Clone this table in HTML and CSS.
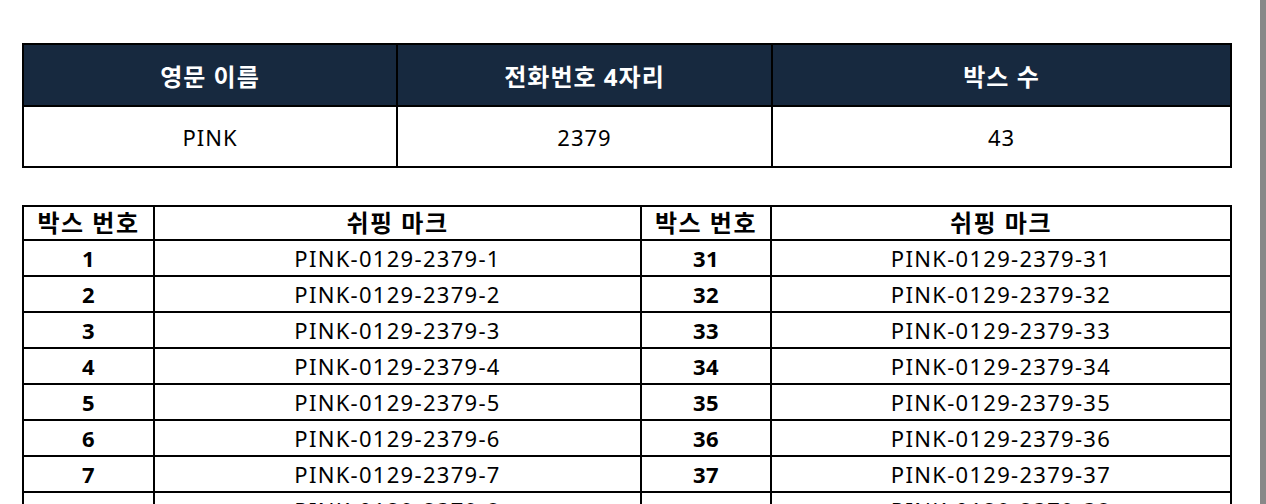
FILE: index.html
```html
<!DOCTYPE html>
<html lang="ko">
<head>
<meta charset="utf-8">
<title>쉬핑 마크</title>
<link rel="stylesheet" href="styles.css">
</head>
<body>
<div class="page">
  <main class="content">
    <table class="summary">
      <colgroup>
        <col class="s-c1"><col class="s-c2"><col class="s-c3">
      </colgroup>
      <thead>
        <tr><th>영문 이름</th><th>전화번호 4자리</th><th>박스 수</th></tr>
      </thead>
      <tbody>
        <tr><td>PINK</td><td>2379</td><td>43</td></tr>
      </tbody>
    </table>

    <table class="marks">
      <colgroup>
        <col class="m-num"><col class="m-mark"><col class="m-num2"><col class="m-mark2">
      </colgroup>
      <thead>
        <tr><th>박스 번호</th><th>쉬핑 마크</th><th>박스 번호</th><th>쉬핑 마크</th></tr>
      </thead>
      <tbody>
        <tr><td class="num">1</td><td>PINK-0129-2379-1</td><td class="num">31</td><td>PINK-0129-2379-31</td></tr>
        <tr><td class="num">2</td><td>PINK-0129-2379-2</td><td class="num">32</td><td>PINK-0129-2379-32</td></tr>
        <tr><td class="num">3</td><td>PINK-0129-2379-3</td><td class="num">33</td><td>PINK-0129-2379-33</td></tr>
        <tr><td class="num">4</td><td>PINK-0129-2379-4</td><td class="num">34</td><td>PINK-0129-2379-34</td></tr>
        <tr><td class="num">5</td><td>PINK-0129-2379-5</td><td class="num">35</td><td>PINK-0129-2379-35</td></tr>
        <tr><td class="num">6</td><td>PINK-0129-2379-6</td><td class="num">36</td><td>PINK-0129-2379-36</td></tr>
        <tr><td class="num">7</td><td>PINK-0129-2379-7</td><td class="num">37</td><td>PINK-0129-2379-37</td></tr>
        <tr><td class="num">8</td><td>PINK-0129-2379-8</td><td class="num">38</td><td>PINK-0129-2379-38</td></tr>
      </tbody>
    </table>
  </main>
  <div class="rail"></div>
</div>
</body>
</html>
```

FILE: styles.css
```css
html, body {
  margin: 0;
  padding: 0;
  background: #ffffff;
  height: 100%;
  overflow: hidden;
}

.page {
  display: flex;
  height: 100%;
  font-family: "Noto Sans", "Noto Sans CJK KR", sans-serif;
  color: #000;
}

.content {
  flex: 1;
  min-width: 0;
  padding: 43px 28px 0 22px;
  display: flex;
  flex-direction: column;
  gap: 37px;
}

.rail {
  width: 6px;
  min-width: 6px;
  background: #888888;
  flex: none;
}

table {
  border-collapse: collapse;
  table-layout: fixed;
  width: 1208px;
}

th, td {
  border: 2px solid #000;
  padding: 0;
  text-align: center;
  vertical-align: middle;
}

/* summary table */
.s-c1 { width: 374px; }
.s-c2 { width: 375px; }
.s-c3 { width: 459px; }

.summary th {
  background: #17293f;
  color: #fff;
  font-weight: 700;
  font-size: 24px;
  letter-spacing: 1px;
  height: 60px;
}

.summary td {
  font-size: 22px;
  letter-spacing: 1px;
  height: 59px;
}

/* marks table */
.m-num { width: 131px; }
.m-mark { width: 487px; }
.m-num2 { width: 130px; }
.m-mark2 { width: 460px; }

.marks th {
  font-size: 24px;
  font-weight: 700;
  letter-spacing: 1.5px;
  height: 32px;
  line-height: 1;
}

.marks td {
  font-size: 22px;
  letter-spacing: 1.3px;
  height: 33px;
  line-height: 1;
  padding-bottom: 1px;
}

.marks td.num {
  font-weight: 700;
  letter-spacing: 0.5px;
}
```
